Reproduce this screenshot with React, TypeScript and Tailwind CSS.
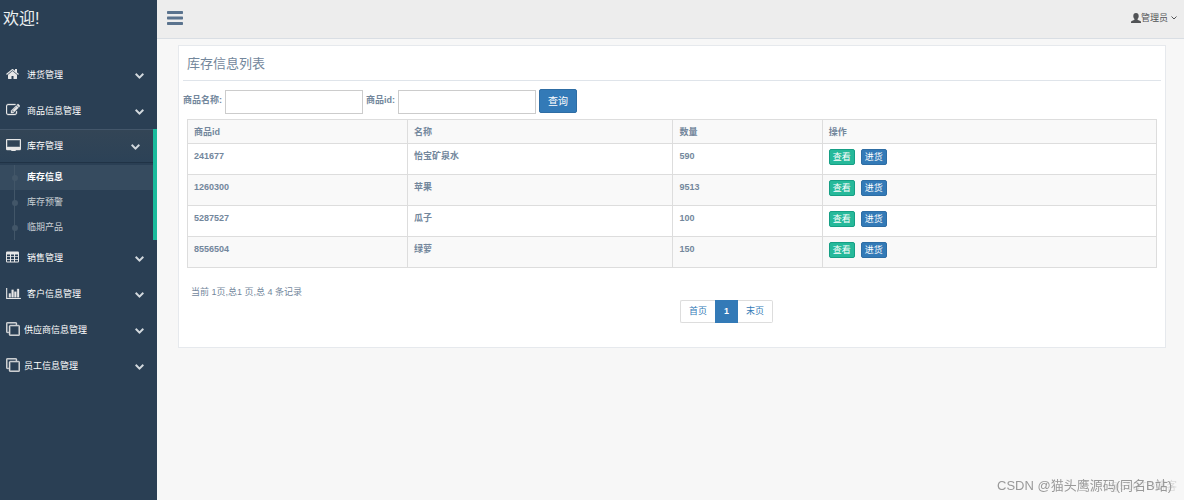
import type { ReactNode } from "react";

function Svg({ box, className, children }: { box: string; className: string; children: ReactNode }) {
  return (
    <svg viewBox={box} fill="currentColor" className={className} aria-hidden="true">
      {children}
    </svg>
  );
}

const HomeIcon = () => (
  <Svg box="0 0 1792 1792" className="size-[14px]">
    <path d="M1408 992v480q0 26-19 45t-45 19h-384v-384h-256v384h-384q-26 0-45-19t-19-45v-480q0-1 .5-3t.5-3l575-474 575 474q1 2 1 6zm223-69l-62 74q-8 9-21 11h-3q-13 0-21-7l-692-577-692 577q-12 8-24 7-13-2-21-11l-62-74q-8-10-7-23.5t11-21.5l719-599q32-26 76-26t76 26l244 204v-195q0-14 9-23t23-9h192q14 0 23 9t9 23v408l219 182q10 8 11 21.5t-7 23.5z" />
  </Svg>
);

const EditIcon = () => (
  <Svg box="0 0 1792 1792" className="size-[14px]">
    <path
      stroke="currentColor"
      strokeWidth="40"
      d="M888 1184l116-116-152-152-116 116v56h96v96h56zm440-720q-16-16-33 1l-350 350q-17 17-1 33t33-1l350-350q17-17 1-33zm80 594v190q0 119-84.5 203.5t-203.5 84.5h-832q-119 0-203.5-84.5t-84.5-203.5v-832q0-119 84.5-203.5t203.5-84.5h832q63 0 117 25 15 7 18 23 3 17-9 29l-49 49q-14 14-32 8-23-6-45-6h-832q-66 0-113 47t-47 113v832q0 66 47 113t113 47h832q66 0 113-47t47-113v-126q0-13 9-22l64-64q15-15 35-7t20 29zm-96-738l288 288-672 672h-288v-288zm444 132l-92 92-288-288 92-92q28-28 68-28t68 28l152 152q28 28 28 68t-28 68z"
    />
  </Svg>
);

const DesktopIcon = () => (
  <Svg box="-64 0 1920 1536" className="h-3 w-[15px]">
    <path
      stroke="currentColor"
      strokeWidth="60"
      d="M1728 992v-832q0-13-9.5-22.5t-22.5-9.5h-1600q-13 0-22.5 9.5t-9.5 22.5v832q0 13 9.5 22.5t22.5 9.5h1600q13 0 22.5-9.5t9.500-22.5zm128-832v1088q0 66-47 113t-113 47h-544q0 37 16 77.5t32 71 16 43.500q0 26-19 45t-45 19h-512q-26 0-45-19t-19-45q0-14 16-44t32-70 16-78h-544q-66 0-113-47t-47-113v-1088q0-66 47-113t113-47h1600q66 0 113 47t47 113z"
    />
  </Svg>
);

const TableIcon = () => (
  <Svg box="0 0 13 12" className="h-3 w-[13px]">
    <path
      fillRule="evenodd"
      d="M1.200 0.500h10.600q1.200 0 1.200 1.200v8.600q0 1.200-1.200 1.200h-10.600q-1.200 0-1.200-1.200v-8.600q0-1.200 1.200-1.200zM1 3.400v1.800h3v-1.800zM5 3.400v1.800h3v-1.800zM9 3.400v1.800h3v-1.800zM1 6.100v1.800h3v-1.800zM5 6.100v1.800h3v-1.800zM9 6.100v1.800h3v-1.800zM1 8.800v1.700h3v-1.700zM5 8.800v1.700h3v-1.700zM9 8.800v1.700h3v-1.700z"
    />
  </Svg>
);

const ChartIcon = () => (
  <Svg box="0 0 2048 1536" className="h-[11px] w-[15px]">
    <path
      stroke="currentColor"
      strokeWidth="40"
      d="M640 768v512h-256v-512zM1024 256v1024h-256v-1024zM2048 1408v128h-2048v-1536h128v1408zM1408 512v768h-256v-768zM1792 128v1152h-256v-1152z"
    />
  </Svg>
);

const CloneIcon = () => (
  <Svg box="-32 -32 1856 1856" className="size-[14px]">
    <path
      stroke="currentColor"
      strokeWidth="60"
      d="M1664 1632v-1088q0-13-9.500-22.500t-22.500-9.500h-1088q-13 0-22.500 9.500t-9.500 22.500v1088q0 13 9.500 22.500t22.500 9.500h1088q13 0 22.500-9.500t9.500-22.500zM1792 544v1088q0 66-47 113t-113 47h-1088q-66 0-113-47t-47-113v-1088q0-66 47-113t113-47h1088q66 0 113 47t47 113zM1408 160v160h-128v-160q0-13-9.500-22.500t-22.500-9.500h-1088q-13 0-22.500 9.500t-9.500 22.500v1088q0 13 9.500 22.500t22.500 9.500h160v128h-160q-66 0-113-47t-47-113v-1088q0-66 47-113t113-47h1088q66 0 113 47t47 113z"
    />
  </Svg>
);

const ChevronIcon = () => (
  <Svg box="64 500 1664 1100" className="mt-0.5 h-[6px] w-[9px] text-[#d3d9de]">
    <path d="M1683 808l-742 741q-19 19-45 19t-45-19l-742-741q-19-19-19-45.500t19-45.500l166-165q19-19 45-19t45 19l531 531 531-531q19-19 45-19t45 19l166 165q19 19 19 45.500t-19 45.500z" />
  </Svg>
);

const BarsIcon = () => (
  <Svg box="0 0 16 14" className="h-[14px] w-4">
    <rect width="16" height="3" rx="0.700" />
    <rect y="5.500" width="16" height="3" rx="0.700" />
    <rect y="11" width="16" height="3" rx="0.700" />
  </Svg>
);

const UserIcon = () => (
  <Svg box="0 0 10 10" className="size-[10px]">
    <path d="M5 0c1.800 0 2.700 1.200 2.700 2.900 0 1.400-.5 2.400-1.200 3v.4c0 .3.200.5.500.6l2.300 1c.5.200.7.600.7 1.100v1h-10v-1c0-.5.2-.9.700-1.100l2.300-1c.3-.1.5-.3.5-.6v-.4c-.7-.6-1.200-1.600-1.200-3 0-1.700.9-2.900 2.700-2.900z" />
  </Svg>
);

type MenuItem = { label: string; icon: ReactNode; narrow?: boolean; children?: string[] };

const menu: MenuItem[] = [
  { label: "进货管理", icon: <HomeIcon /> },
  { label: "商品信息管理", icon: <EditIcon /> },
  { label: "库存管理", icon: <DesktopIcon />, children: ["库存信息", "库存预警", "临期产品"] },
  { label: "销售管理", icon: <TableIcon /> },
  { label: "客户信息管理", icon: <ChartIcon /> },
  { label: "供应商信息管理", icon: <CloneIcon />, narrow: true },
  { label: "员工信息管理", icon: <CloneIcon />, narrow: true },
];

const rows = [
  { id: "241677", name: "怡宝矿泉水", count: 590 },
  { id: "1260300", name: "苹果", count: 9513 },
  { id: "5287527", name: "瓜子", count: 100 },
  { id: "8556504", name: "绿萝", count: 150 },
];

function Sidebar() {
  return (
    <aside className="w-[157px] shrink-0 bg-[#2a3f54] text-[#e7e7e7]">
      <h1 className="h-[57px] px-[3px] pt-[7px] text-[16px] leading-6 text-[#ecf0f1]">欢迎!</h1>
      <ul>
        {menu.map((item) => (
          <li key={item.label} className={item.children ? "border-r-4 border-[#1abb9c]" : ""}>
            <button
              type="button"
              className={`flex w-full items-center pr-[13px] pl-1.5 text-left text-[9px] leading-4 text-white ${
                item.children
                  ? "h-[34px] border-y border-t-[#43566a] border-b-[#203346] bg-linear-to-b from-[#334556] to-[#2c4257]"
                  : "h-9"
              }`}
            >
              <span className={`pb-0.5 text-[#e7e7e7] ${item.narrow ? "w-[18px]" : "w-[21px]"}`}>{item.icon}</span>
              <span className="flex-1">{item.label}</span>
              <ChevronIcon />
            </button>
            {item.children && (
              <ul className="relative mt-0.5 before:absolute before:top-0 before:bottom-0 before:left-[14px] before:z-10 before:w-px before:bg-[#425668]">
                {item.children.map((child, i) => (
                  <li
                    key={child}
                    className={`relative flex h-[25px] items-center text-[9px] before:absolute before:top-2.5 before:left-3 before:size-[6px] before:rounded-full before:bg-[#425668] ${
                      i === 0 ? "bg-[#364b5f] font-bold text-white" : "text-white/75"
                    }`}
                  >
                    <a href="#" className="flex-1 pl-[27px]">
                      {child}
                    </a>
                  </li>
                ))}
              </ul>
            )}
          </li>
        ))}
      </ul>
    </aside>
  );
}

function TopBar() {
  return (
    <header className="flex h-[39px] items-start justify-between border-b border-[#d9dee4] bg-[#ededed] pt-[11px] pr-[7px] pl-2.5">
      <button type="button" aria-label="菜单" className="text-[#5a738e]">
        <BarsIcon />
      </button>
      <button type="button" className="flex items-center text-[9px] leading-[14px] text-[#515356]">
        <UserIcon />
        管理员
        <svg viewBox="0 0 6 4" className="ml-[3px] h-1 w-1.5" fill="none" stroke="currentColor" aria-hidden="true">
          <path d="M0.500 0.500L3 3L5.500 0.500" />
        </svg>
      </button>
    </header>
  );
}

function SearchForm() {
  return (
    <form className="flex items-center gap-[3px] text-[9px] font-bold" onSubmit={(e) => e.preventDefault()}>
      <label htmlFor="goods-name">商品名称:</label>
      <input id="goods-name" type="text" className="mt-0.5 h-6 w-[138px] border border-[#ccc] bg-white px-1" />
      <label htmlFor="goods-id">商品id:</label>
      <input id="goods-id" type="text" className="mt-0.5 h-6 w-[138px] border border-[#ccc] bg-white px-1" />
      <button
        type="submit"
        className="h-6 w-[38px] rounded-xs border border-[#2e6da4] bg-[#337ab7] text-[10px] font-normal text-white"
      >
        查询
      </button>
    </form>
  );
}

function StockTable() {
  const cell = "border border-[#ddd] px-1.5 pt-[5px] text-left align-top font-bold";
  const action = "h-4 w-[26px] rounded-xs border text-[9px] leading-[14px] font-normal text-white";

  return (
    <table className="w-full table-fixed border-collapse text-[9px] leading-[14px]">
      <colgroup>
        <col className="w-[22.7%]" />
        <col className="w-[27.4%]" />
        <col className="w-[15.4%]" />
        <col />
      </colgroup>
      <thead>
        <tr className="h-6 bg-[#f9f9f9]">
          {["商品id", "名称", "数量", "操作"].map((title) => (
            <th key={title} className={cell}>
              {title}
            </th>
          ))}
        </tr>
      </thead>
      <tbody>
        {rows.map((row) => (
          <tr key={row.id} className="h-[31px] even:bg-[#f9f9f9]">
            <td className={cell}>{row.id}</td>
            <td className={cell}>{row.name}</td>
            <td className={cell}>{row.count}</td>
            <td className={cell}>
              <div className="flex gap-1.5">
                <button type="button" className={`${action} border-[#169f85] bg-[#26b99a]`}>
                  查看
                </button>
                <button type="button" className={`${action} border-[#2e6da4] bg-[#337ab7]`}>
                  进货
                </button>
              </div>
            </td>
          </tr>
        ))}
      </tbody>
    </table>
  );
}

function Pagination() {
  return (
    <nav className="flex text-[9px] leading-[21px] text-[#337ab7]">
      <a href="#" className="rounded-l-xs border border-r-0 border-[#ddd] px-2">
        首页
      </a>
      <a href="#" aria-current="page" className="border border-[#337ab7] bg-[#337ab7] px-2 font-bold text-white">
        1
      </a>
      <a href="#" className="rounded-r-xs border border-l-0 border-[#ddd] px-2">
        末页
      </a>
    </nav>
  );
}

export default function App() {
  return (
    <div className="flex min-h-screen bg-[#f7f7f7] font-['Liberation_Sans','Noto_Sans_CJK_SC',sans-serif] text-[#73879c]">
      <Sidebar />
      <div className="flex min-w-0 flex-1 flex-col">
        <TopBar />
        <main className="mt-1.5 mr-[18px] ml-[21px] border border-[#e6e9ed] bg-white px-1 pb-6">
          <h2 className="mb-[7px] border-b border-[#dfe4ea] px-1 pt-[7px] pb-[5px] text-[13px] leading-[22px]">
            库存信息列表
          </h2>
          <SearchForm />
          <div className="px-1 pt-[5px]">
            <StockTable />
            <p className="px-1 pt-4 text-[9px] leading-4">当前 1页,总1 页,总 4 条记录</p>
            <div className="ml-[50%] pl-2">
              <Pagination />
            </div>
          </div>
        </main>
      </div>
      <p className="fixed right-3 bottom-1 text-[13px] leading-5 text-[#999]">CSDN @猫头鹰源码(同名B站)</p>
      <p className="fixed right-[7px] bottom-1 text-[11px] leading-5 text-[#999]/30">@51CTO博客</p>
    </div>
  );
}
